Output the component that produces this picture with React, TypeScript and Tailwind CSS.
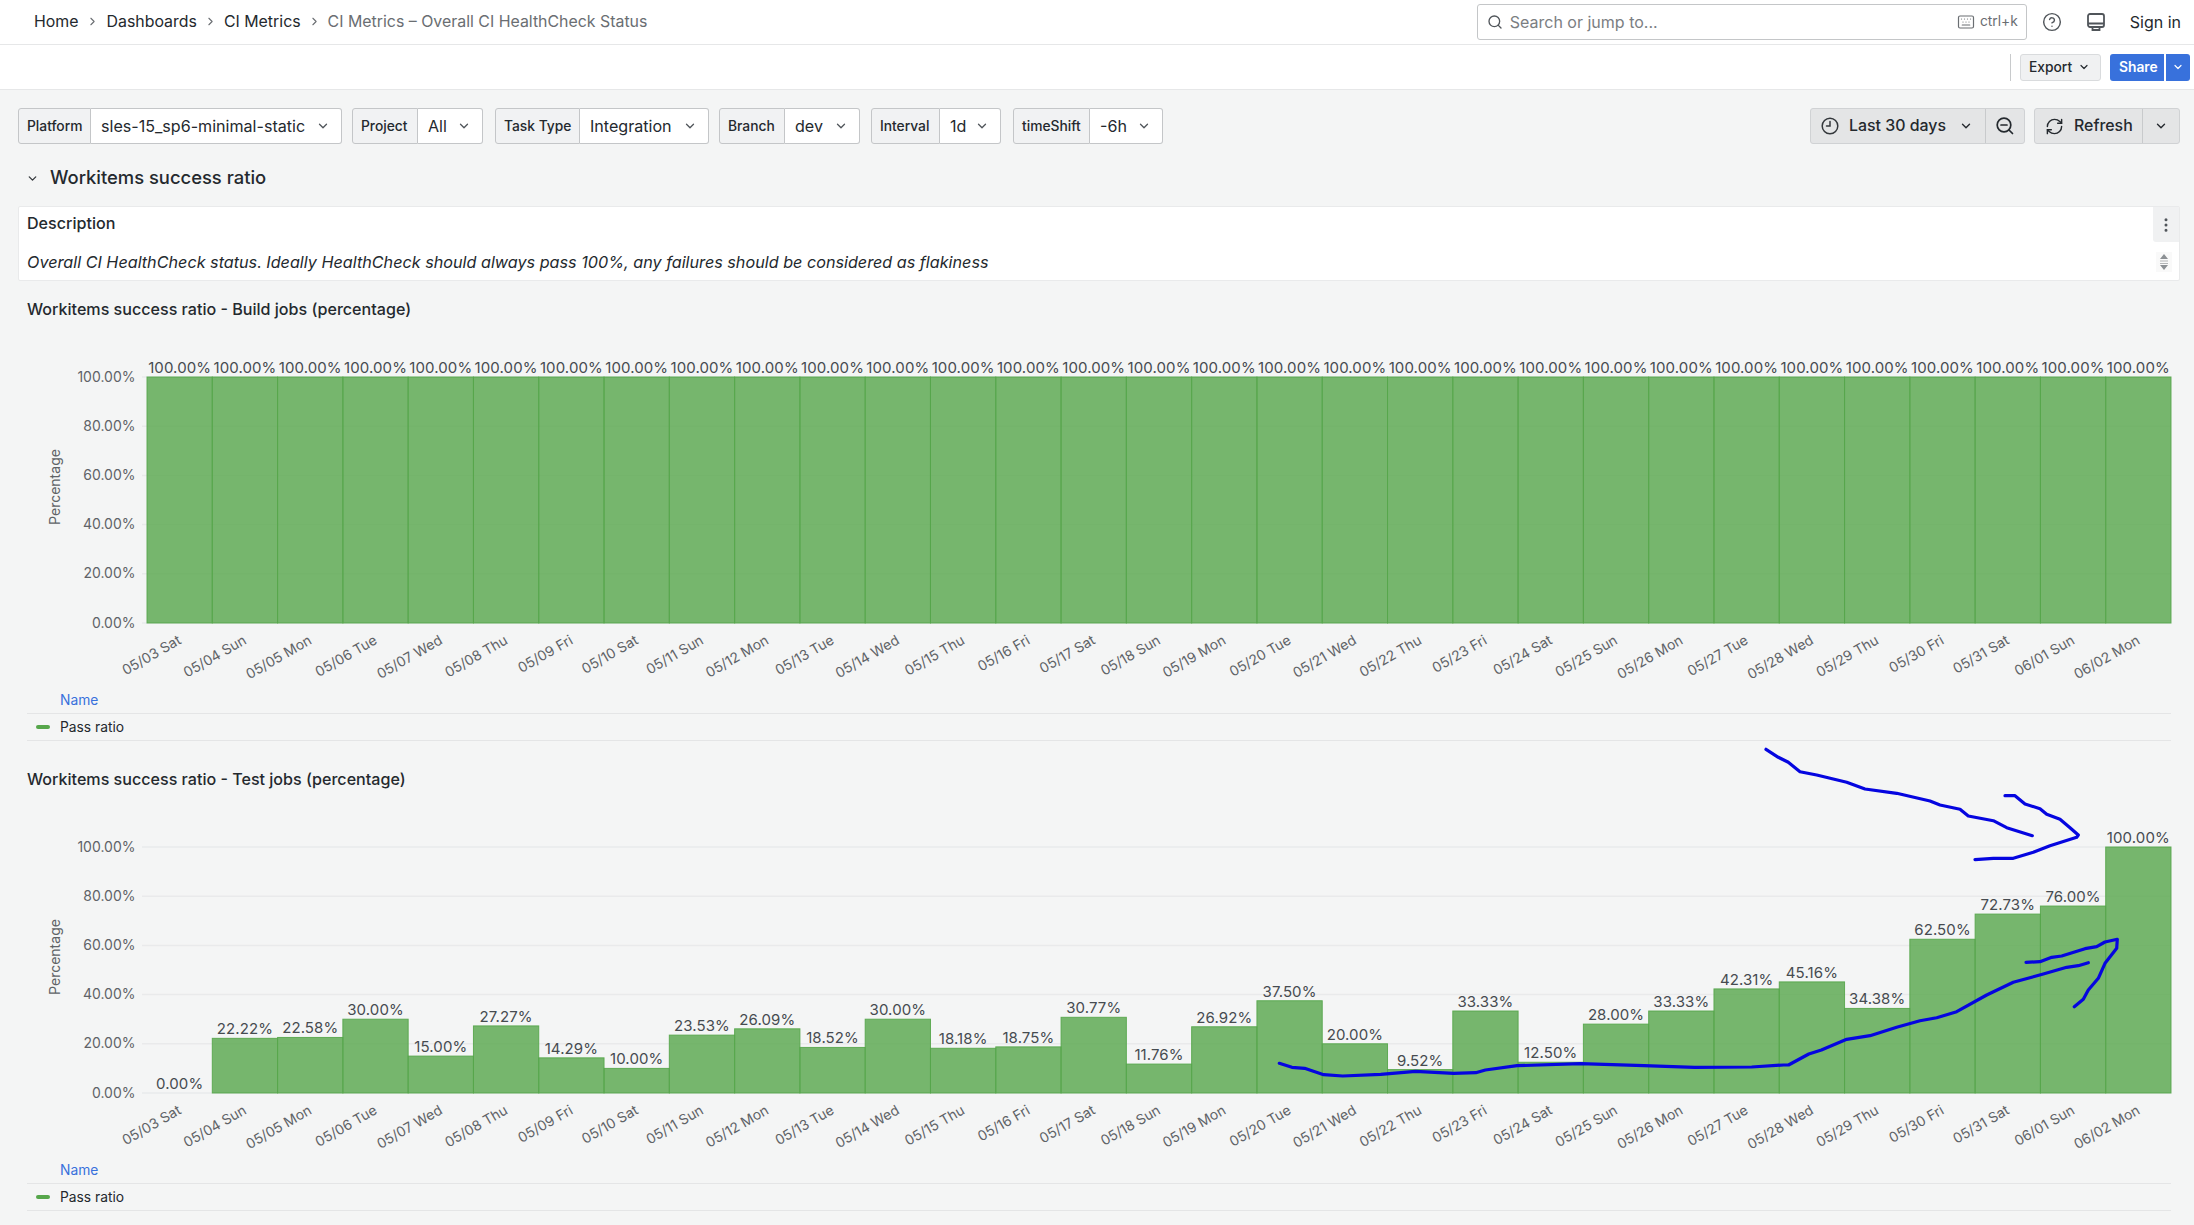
import React from 'react';
import { ChevronDown, ChevronRight, Search, Keyboard, CircleHelp, RefreshCw, MoreVertical } from 'lucide-react';

const FONT = "font-['Inter','Noto_Sans',sans-serif]";
const days = ['Sun', 'Mon', 'Tue', 'Wed', 'Thu', 'Fri', 'Sat'];
const dates: string[] = [];
for (let i = 0; i < 31; i++) {
  const m = i < 29 ? '05' : '06';
  const d = i < 29 ? i + 3 : i - 28;
  dates.push(`${m}/${String(d).padStart(2, '0')} ${days[(i + 6) % 7]}`);
}
const build = Array(31).fill(100);
const test = [0, 22.22, 22.58, 30, 15, 27.27, 14.29, 10, 23.53, 26.09, 18.52, 30, 18.18, 18.75, 30.77, 11.76, 26.92, 37.5, 20, 9.52, 33.33, 12.5, 28, 33.33, 42.31, 45.16, 34.38, 62.5, 72.73, 76, 100];

const vars = [
  { label: 'Platform', value: 'sles-15_sp6-minimal-static', lw: 'w-[73px]', vw: 'w-[251px]', ml: 'ml-0' },
  { label: 'Project', value: 'All', lw: 'w-[66px]', vw: 'w-[65px]', ml: 'ml-[10px]' },
  { label: 'Task Type', value: 'Integration', lw: 'w-[85px]', vw: 'w-[129px]', ml: 'ml-[12px]' },
  { label: 'Branch', value: 'dev', lw: 'w-[66px]', vw: 'w-[75px]', ml: 'ml-[10px]' },
  { label: 'Interval', value: '1d', lw: 'w-[69px]', vw: 'w-[61px]', ml: 'ml-[11px]' },
  { label: 'timeShift', value: '-6h', lw: 'w-[77px]', vw: 'w-[73px]', ml: 'ml-[12px]' },
];

function VarPicker({ v }: { v: (typeof vars)[number] }) {
  return (
    <div className={`flex h-[36px] ${v.ml}`}>
      <div className={`${v.lw} flex items-center pl-[8px] border border-[#c4c6c8] rounded-l-[3px] bg-[#f1f2f3] text-[13.8px] font-medium text-[#24292e]`}>{v.label}</div>
      <div className={`${v.vw} flex items-center justify-between pl-[10px] pr-[11px] border border-l-0 border-[#c4c6c8] rounded-r-[3px] bg-white text-[16.1px] text-[#24292e]`}>
        <span>{v.value}</span>
        <ChevronDown size={14} strokeWidth={2.2} className="text-[#50555a]" />
      </div>
    </div>
  );
}

const LEFT = 129;
const RIGHT = 2153;
const TOP = 51;
const BOTTOM = 297;
const BW = (RIGHT - LEFT) / 31;

function Chart({ data }: { data: number[] }) {
  const h = BOTTOM - TOP;
  return (
    <svg width={2162} height={360} className="block" style={{ fontFamily: 'Inter, sans-serif' }}>
      {[0, 20, 40, 60, 80, 100].map((t) => {
        const y = BOTTOM - (t / 100) * h;
        return (
          <g key={t}>
            <line x1={124} x2={RIGHT} y1={y} y2={y} stroke="#e9eaeb" strokeWidth={1.5} />
            <text x={117.5} y={y - 1} textAnchor="end" dominantBaseline="central" fontSize={14} fill="#5f6367">{t.toFixed(2)}%</text>
          </g>
        );
      })}
      <text transform="translate(36.5,161) rotate(-90)" textAnchor="middle" dominantBaseline="central" fontSize={14} fill="#5f6367">Percentage</text>
      {data.map((v, i) => {
        const x = LEFT + i * BW;
        const y = BOTTOM - (v / 100) * h;
        return (
          <g key={i}>
            <rect x={x} y={y} width={BW} height={BOTTOM - y} fill="#56a64b" fillOpacity={0.8} stroke={v === 0 ? '#a9d2a4' : '#56a64b'} strokeOpacity={0.9} strokeWidth={1} />
            <text x={x + BW / 2} y={y - 4} textAnchor="middle" fontSize={15} letterSpacing={0.1} fill="#464b50">{v.toFixed(2)}%</text>
            <text transform={`translate(${x + BW / 2 + 2.5},${BOTTOM + 20}) rotate(-30)`} textAnchor="end" fontSize={14} fill="#5f6367">{dates[i]}</text>
          </g>
        );
      })}
    </svg>
  );
}

function Panel({ title, data }: { title: string; data: number[] }) {
  return (
    <section className="mt-[9px] h-[461px]">
      <h2 className="h-[36px] pl-[9px] pt-[2px] flex items-center text-[16.1px] font-medium text-[#24292e]">{title}</h2>
      <Chart data={data} />
      <div className="ml-[9px] w-[2144px] text-[13.8px]">
        <div className="h-[28px] flex items-center pl-[33px] pt-[2px] border-b border-[#e4e5e6] text-[#3871dc]">Name</div>
        <div className="h-[27px] flex items-center pl-[9px] gap-[10px] border-b border-[#e4e5e6] text-[#24292e]">
          <span className="w-[14px] h-[4px] rounded-[2px] bg-[#56a64b]" />
          <span>Pass ratio</span>
        </div>
      </div>
    </section>
  );
}

const z4 = (p: number[][]) => p.map(([x, y]) => [1700 + x / 3, 730 + y / 3]);
const z5 = (p: number[][]) => p.map(([x, y]) => [1200 + x / 1.577, 900 + y / 3]);
const toD = (p: number[][]) => 'M' + p.map(([x, y]) => `${x.toFixed(1)} ${y.toFixed(1)}`).join('L');
const strokes = [
  z4([[198, 58], [235, 82], [265, 97], [300, 125], [350, 135], [440, 157], [495, 177], [590, 190], [690, 213], [720, 225], [780, 238], [805, 258], [880, 272], [920, 293], [997, 317]]),
  z4([[915, 197], [945, 197], [975, 222], [1020, 236], [1040, 253], [1080, 268], [1110, 293], [1135, 315], [1130, 322], [1050, 347], [1000, 367], [940, 385], [880, 385], [825, 389]]),
  [
    ...z5([[125, 490], [145, 502], [165, 505], [195, 524], [225, 528], [285, 523], [340, 514], [400, 520], [435, 518], [450, 510], [500, 497], [600, 491], [700, 497], [780, 502], [870, 501], [920, 495], [928, 495], [960, 462], [980, 450]]),
    ...z4([[440, 928], [510, 917], [590, 892], [660, 872], [710, 863], [770, 845], [860, 795], [940, 757], [1030, 732], [1100, 712], [1135, 707], [1165, 698]]),
  ],
  z4([[978, 697], [1020, 695], [1055, 682], [1085, 678], [1155, 656], [1190, 650], [1215, 636], [1252, 628], [1250, 655], [1215, 700], [1195, 745], [1165, 780], [1150, 808], [1123, 830]]),
];

export default function App() {
  return (
    <div className={`relative w-[2194px] h-[1225px] overflow-hidden bg-[#f4f5f5] text-[#24292e] ${FONT}`}>
      {/* Top bar */}
      <header className="h-[45px] bg-white border-b border-[#e6e7e8] flex items-center pl-[34px] pr-[13px] pb-[1px] text-[16px]">
        <nav className="flex items-center text-[15.9px]">
          <span>Home</span>
          <ChevronRight size={13} className="mx-[7.5px] text-[#6a6e72]" />
          <span>Dashboards</span>
          <ChevronRight size={13} className="mx-[7px] text-[#6a6e72]" />
          <span>CI Metrics</span>
          <ChevronRight size={13} className="mx-[7px] text-[#6a6e72]" />
          <span className="text-[#6a6e72]">CI Metrics – Overall CI HealthCheck Status</span>
        </nav>
        <div className="ml-auto w-[550px] h-[36px] border border-[#c4c6c8] rounded-[3px] bg-white flex items-center pl-[9px] pr-[8px]">
          <Search size={16} className="text-[#50555a]" />
          <span className="ml-[7px] text-[#7b7e82]">Search or jump to...</span>
          <Keyboard size={18} strokeWidth={1.6} className="ml-auto text-[#6a6e72]" />
          <span className="ml-[5px] text-[13.8px] text-[#6a6e72]">ctrl+k</span>
        </div>
        <CircleHelp size={20} strokeWidth={1.7} className="ml-[15px] text-[#50555a]" />
        <svg width="18" height="20" viewBox="0 0 18 20" className="ml-[25px] text-[#50555a]" fill="none" stroke="currentColor" strokeWidth="1.8">
          <rect x="1" y="2" width="16" height="13" rx="2" />
          <path d="M1 11.5h16M5.5 15v3h7v-3" />
        </svg>
        <span className="ml-[25px] whitespace-nowrap">Sign in</span>
      </header>
      {/* Toolbar */}
      <div className="h-[45px] bg-white border-b border-[#e6e7e8] flex items-center justify-end pr-[4px]">
        <div className="w-px h-[27px] bg-[#c8cacc] mr-[9px]" />
        <button className="w-[81px] h-[27px] bg-[#f0f1f2] border border-[#d9dbdd] rounded-[3px] flex items-center justify-between pl-[8px] pr-[10px] text-[13.8px] font-medium">
          Export <ChevronDown size={12} strokeWidth={2.4} />
        </button>
        <button className="ml-[9px] w-[54px] h-[27px] bg-[#3871dc] rounded-l-[3px] pl-[9px] text-left text-white text-[13.8px] font-semibold">Share</button>
        <button className="ml-[2px] w-[24px] h-[27px] bg-[#3871dc] rounded-r-[3px] flex items-center justify-center text-white"><ChevronDown size={12} strokeWidth={2.4} /></button>
      </div>

      <main className="pl-[18px] pr-[14px] pt-[18px] w-[2194px]">
        <div className="flex items-center w-[2162px]">
          {vars.map((v) => <VarPicker key={v.label} v={v} />)}
          <div className="ml-auto flex h-[36px] w-[215px] rounded-[3px] border border-[#d0d2d4] bg-[#e4e5e6]">
            <div className="w-[175px] flex items-center pl-[10px] border-r border-[#c8cacc] font-medium text-[15.9px]">
              <svg width="18" height="18" viewBox="0 0 18 18" fill="none" stroke="#34383c" strokeWidth="1.5" strokeLinecap="round">
                <circle cx="9" cy="9" r="7.8" />
                <path d="M9 4.5V9H5.5" />
              </svg>
              <span className="ml-[10px]">Last 30 days</span>
              <ChevronDown size={14} strokeWidth={2.4} className="ml-[13px]" />
            </div>
            <div className="flex-1 flex items-center justify-center">
              <svg width="18" height="18" viewBox="0 0 18 18" fill="none" stroke="#24292e" strokeWidth="1.7" strokeLinecap="round">
                <circle cx="8" cy="8" r="6.8" />
                <path d="M5 8h6M13 13l3.5 3.5" />
              </svg>
            </div>
          </div>
          <div className="ml-[9px] flex h-[36px] w-[146px] rounded-[3px] border border-[#d0d2d4] bg-[#e4e5e6]">
            <div className="w-[108px] flex items-center pl-[10px] border-r border-[#c8cacc] font-medium text-[15.9px]">
              <RefreshCw size={19} strokeWidth={1.8} />
              <span className="ml-[10px]">Refresh</span>
            </div>
            <div className="flex-1 flex items-center justify-center"><ChevronDown size={14} strokeWidth={2.4} /></div>
          </div>
        </div>

        <div className="mt-[18px] mb-[12px] h-[32px] flex items-center">
          <ChevronDown size={13} strokeWidth={2.4} className="ml-[8px] text-[#34383c]" />
          <span className="ml-[11px] text-[18.4px] font-medium">Workitems success ratio</span>
        </div>

        <section className="relative h-[75px] bg-white border border-[#e9eaeb] rounded-[2px] pl-[8px]">
          <div className="h-[33px] flex items-center text-[16.1px] font-medium">Description</div>
          <p className="mt-[4px] h-[36px] flex items-center italic text-[16.2px]">Overall CI HealthCheck status. Ideally HealthCheck should always pass 100%, any failures should be considered as flakiness</p>
          <div className="absolute right-0 top-0 w-[26px] h-[35px] bg-[#f0f1f2] rounded-bl-[3px] flex items-center justify-center"><MoreVertical size={18} strokeWidth={2} className="text-[#50555a]" /></div>
          <div className="absolute right-[7px] top-[45px] w-[16px] h-[20px] bg-[#f9f9f9] flex items-center justify-center">
            <svg width="10" height="18" viewBox="0 0 10 18" fill="#8c9094">
              <path d="M5 1l4 5H1zM5 17l4-5H1z" />
              <rect x="1" y="7.5" width="8" height="1" fill="#b4b6b8" /><rect x="1" y="10" width="8" height="1" fill="#b4b6b8" />
            </svg>
          </div>
        </section>

        <Panel title="Workitems success ratio - Build jobs (percentage)" data={build} />
        <Panel title="Workitems success ratio - Test jobs (percentage)" data={test} />
      </main>

      {/* Hand-drawn annotation lying over the charts */}
      <svg width={2194} height={1225} className="absolute inset-0 pointer-events-none" fill="none" stroke="#0505e0" strokeWidth={3.2} strokeLinecap="round" strokeLinejoin="round">
        {strokes.map((s, i) => <path key={i} d={toD(s)} />)}
      </svg>
    </div>
  );
}
